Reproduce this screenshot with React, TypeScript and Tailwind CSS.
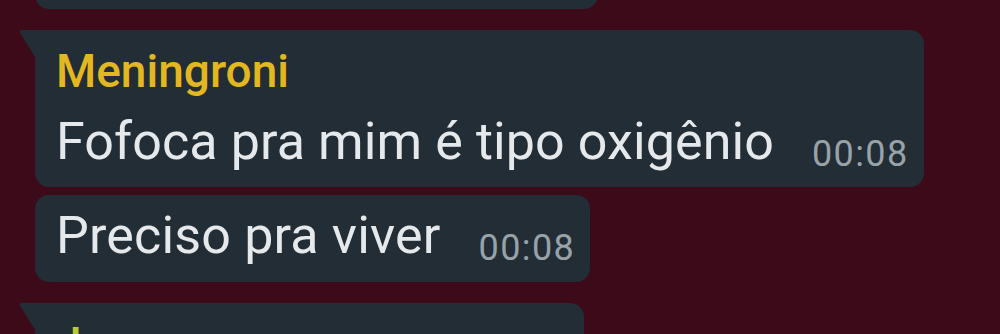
import React from "react";

function Tail() {
  return (
    <svg
      className="absolute left-[-17px] top-0"
      width="17"
      height="27"
      viewBox="0 0 17 27"
    >
      <path d="M17 0 H3.5 Q0.5 0 2 2.6 L17 27 Z" fill="#222d35" />
    </svg>
  );
}

function Time({ children }: { children: React.ReactNode }) {
  return (
    <span className="ml-[38px] text-[36px] leading-[35px] tracking-[1.4px] text-[#99a2a8] whitespace-nowrap">
      {children}
    </span>
  );
}

export default function App() {
  return (
    <div
      className="w-[1000px] h-[334px] overflow-hidden bg-[#3c0a19] pl-[35px]"
      style={{ fontFamily: "Roboto, 'Noto Sans', sans-serif" }}
    >
      <div className="flex flex-col items-start">
        {/* bubble 1 (cut off) */}
        <div className="w-[563px] h-[60px] mt-[-51px] rounded-[14px] bg-[#222d35]" />

        {/* bubble 2 */}
        <div className="relative mt-[21px] rounded-[14px] rounded-tl-none bg-[#222d35] pl-[21px] pr-[15px] pt-[14px] pb-[15px]">
          <Tail />
          <div className="text-[46px] leading-[54px] font-medium text-[#e2b720]">
            Meningroni
          </div>
          <div className="mt-[14px] flex items-end">
            <span className="text-[52px] leading-[60px] tracking-[0.1px] text-[#e6e9eb] whitespace-nowrap">
              Fofoca pra mim é tipo oxigênio
            </span>
            <Time>00:08</Time>
          </div>
        </div>

        {/* bubble 3 */}
        <div className="mt-[8px] rounded-[14px] bg-[#222d35] pl-[21px] pr-[15px] pt-[11px] pb-[16px]">
          <div className="flex items-end">
            <span className="text-[52px] leading-[60px] tracking-[0.17px] text-[#e6e9eb] whitespace-nowrap">
              Preciso pra viver
            </span>
            <Time>00:08</Time>
          </div>
        </div>

        {/* bubble 4 (cut off) */}
        <div className="relative mt-[21px] w-[549px] h-[120px] rounded-[14px] rounded-tl-none bg-[#222d35] pl-[21px] pt-[14px]">
          <Tail />
          <div className="text-[46px] leading-[54px] font-medium text-[#b9cc34]">
            Juca
          </div>
        </div>
      </div>
    </div>
  );
}
